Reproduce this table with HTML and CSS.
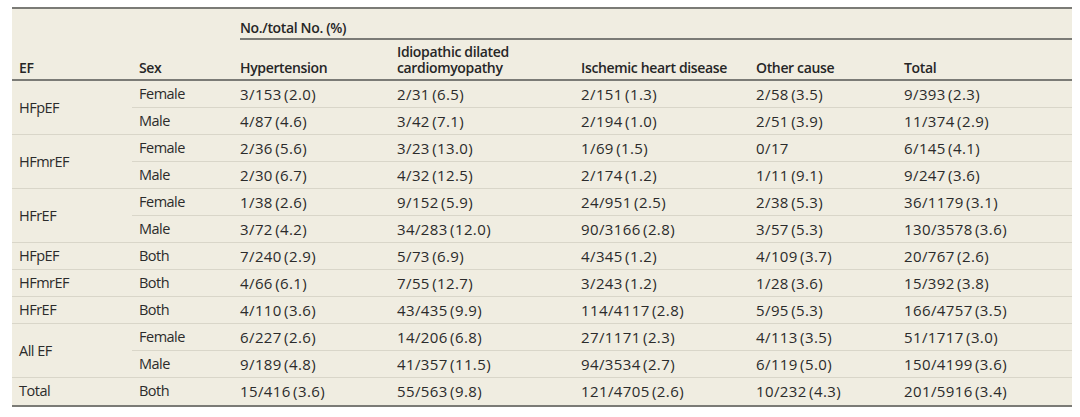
FILE: index.html
```html
<!DOCTYPE html>
<html lang="en">
<head>
<meta charset="utf-8">
<title>Table</title>
<link rel="stylesheet" href="styles.css">
</head>
<body>
<table class="tbl">
  <colgroup>
    <col class="c-ef"><col class="c-sex"><col class="c-hyp"><col class="c-idio"><col class="c-isch"><col class="c-oth"><col class="c-tot">
  </colgroup>
  <thead>
    <tr class="h1">
      <th></th><th></th>
      <th colspan="5" class="span"><div class="span-label">No./total No. (%)</div></th>
    </tr>
    <tr class="h2">
      <th>EF</th><th>Sex</th><th>Hypertension</th><th><span class="ln">Idiopathic dilated</span><span class="ln">cardiomyopathy</span></th><th>Ischemic heart disease</th><th>Other cause</th><th>Total</th>
    </tr>
  </thead>
  <tbody>
    <tr><td rowspan="2" class="ef">HFpEF</td><td class="sex">Female</td><td class="num">3/153 (2.0)</td><td class="num">2/31 (6.5)</td><td class="num">2/151 (1.3)</td><td class="num">2/58 (3.5)</td><td class="num">9/393 (2.3)</td></tr>
    <tr><td class="sex">Male</td><td class="num">4/87 (4.6)</td><td class="num">3/42 (7.1)</td><td class="num">2/194 (1.0)</td><td class="num">2/51 (3.9)</td><td class="num">11/374 (2.9)</td></tr>
    <tr><td rowspan="2" class="ef">HFmrEF</td><td class="sex">Female</td><td class="num">2/36 (5.6)</td><td class="num">3/23 (13.0)</td><td class="num">1/69 (1.5)</td><td class="num">0/17</td><td class="num">6/145 (4.1)</td></tr>
    <tr><td class="sex">Male</td><td class="num">2/30 (6.7)</td><td class="num">4/32 (12.5)</td><td class="num">2/174 (1.2)</td><td class="num">1/11 (9.1)</td><td class="num">9/247 (3.6)</td></tr>
    <tr><td rowspan="2" class="ef">HFrEF</td><td class="sex">Female</td><td class="num">1/38 (2.6)</td><td class="num">9/152 (5.9)</td><td class="num">24/951 (2.5)</td><td class="num">2/38 (5.3)</td><td class="num">36/1179 (3.1)</td></tr>
    <tr><td class="sex">Male</td><td class="num">3/72 (4.2)</td><td class="num">34/283 (12.0)</td><td class="num">90/3166 (2.8)</td><td class="num">3/57 (5.3)</td><td class="num">130/3578 (3.6)</td></tr>
    <tr><td class="ef">HFpEF</td><td class="sex">Both</td><td class="num">7/240 (2.9)</td><td class="num">5/73 (6.9)</td><td class="num">4/345 (1.2)</td><td class="num">4/109 (3.7)</td><td class="num">20/767 (2.6)</td></tr>
    <tr><td class="ef">HFmrEF</td><td class="sex">Both</td><td class="num">4/66 (6.1)</td><td class="num">7/55 (12.7)</td><td class="num">3/243 (1.2)</td><td class="num">1/28 (3.6)</td><td class="num">15/392 (3.8)</td></tr>
    <tr><td class="ef">HFrEF</td><td class="sex">Both</td><td class="num">4/110 (3.6)</td><td class="num">43/435 (9.9)</td><td class="num">114/4117 (2.8)</td><td class="num">5/95 (5.3)</td><td class="num">166/4757 (3.5)</td></tr>
    <tr><td rowspan="2" class="ef">All EF</td><td class="sex">Female</td><td class="num">6/227 (2.6)</td><td class="num">14/206 (6.8)</td><td class="num">27/1171 (2.3)</td><td class="num">4/113 (3.5)</td><td class="num">51/1717 (3.0)</td></tr>
    <tr><td class="sex">Male</td><td class="num">9/189 (4.8)</td><td class="num">41/357 (11.5)</td><td class="num">94/3534 (2.7)</td><td class="num">6/119 (5.0)</td><td class="num">150/4199 (3.6)</td></tr>
    <tr class="last"><td class="ef">Total</td><td class="sex">Both</td><td class="num">15/416 (3.6)</td><td class="num">55/563 (9.8)</td><td class="num">121/4705 (2.6)</td><td class="num">10/232 (4.3)</td><td class="num">201/5916 (3.4)</td></tr>
  </tbody>
</table>
</body>
</html>
```
FILE: styles.css
```css
html, body {
  margin: 0;
  padding: 0;
  background: #ffffff;
}

body {
  font-family: "Open Sans", "Noto Sans", sans-serif;
  font-size: 15px;
  color: #2b2b2b;
}

.tbl {
  margin: 7px 0 0 12px;
  width: 1060px;
  table-layout: fixed;
  border-collapse: separate;
  border-spacing: 0;
  background: #f0ede1;
  border-top: 2px solid #7b7b76;
  border-bottom: 2px solid #7b7b76;
}

.c-ef { width: 120px; }
.c-sex { width: 101px; }
.c-hyp { width: 157px; }
.c-idio { width: 184px; }
.c-isch { width: 175px; }
.c-oth { width: 148px; }
.c-tot { width: 175px; }

th {
  text-align: left;
  font-size: 14px;
  font-weight: 600;
  letter-spacing: -0.35px;
  line-height: 16px;
  padding: 0 7px;
  color: #262626;
  white-space: nowrap;
}

.ln {
  display: block;
  height: 16px;
}

.h1 th {
  padding: 0;
  vertical-align: bottom;
}

.h1 th.span {
  padding-left: 7px;
}

.span-label {
  padding-top: 11px;
  padding-bottom: 2px;
  border-bottom: 2px solid #7b7b76;
}

.h2 th {
  padding: 4px 7px 3px;
  vertical-align: bottom;
  border-bottom: 2px solid #7b7b76;
}

td {
  padding: 5px 7px;
  line-height: 16px;
  vertical-align: middle;
  border-bottom: 1px solid #d9d6c9;
  white-space: nowrap;
}

td.ef,
td.sex {
  font-size: 14.5px;
  letter-spacing: -0.5px;
}

td.num {
  letter-spacing: 0.4px;
  word-spacing: -2px;
}

tr.last td {
  border-bottom: 0;
  padding-bottom: 6px;
}
```
